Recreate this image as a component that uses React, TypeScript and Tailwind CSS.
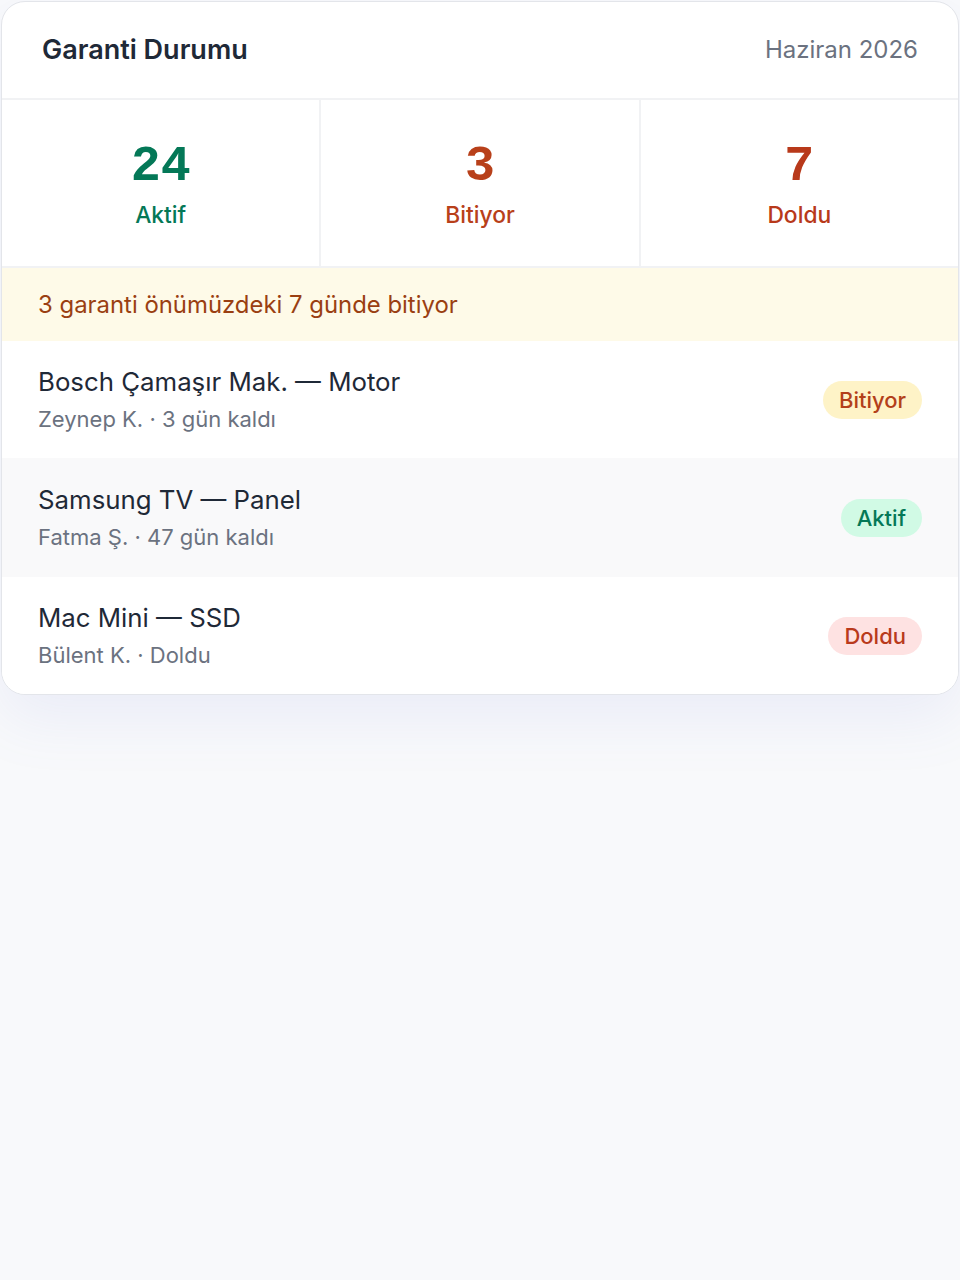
import React from "react";

type Status = "Bitiyor" | "Aktif" | "Doldu";

interface WarrantyItem {
  product: string;
  customer: string;
  remaining: string;
  status: Status;
}

const items: WarrantyItem[] = [
  { product: "Bosch Çamaşır Mak. — Motor", customer: "Zeynep K.", remaining: "3 gün kaldı", status: "Bitiyor" },
  { product: "Samsung TV — Panel", customer: "Fatma Ş.", remaining: "47 gün kaldı", status: "Aktif" },
  { product: "Mac Mini — SSD", customer: "Bülent K.", remaining: "Doldu", status: "Doldu" },
];

const badgeClass: Record<Status, string> = {
  Bitiyor: "bg-[#fef3c7] text-[#b3401a]",
  Aktif: "bg-[#d1fae5] text-[#047857]",
  Doldu: "bg-[#fee2e2] text-[#b93a1c]",
};

const Stat = ({ value, label, color, last }: { value: number; label: string; color: string; last?: boolean }) => (
  <div className={`flex flex-1 flex-col items-center justify-center ${last ? "" : "border-r-2 border-[#f1f2f4]"}`}>
    <span className={`font-mono text-[50px] font-bold leading-[60px] ${color}`}>{value}</span>
    <span className={`mt-[4px] text-[22.8px] font-medium leading-[28px] ${color}`}>{label}</span>
  </div>
);

export default function App() {
  return (
    <div className="min-h-screen bg-[#f8f9fb] px-[1px] pt-[1px] font-['Inter',sans-serif]">
      <div className="overflow-hidden rounded-[24px] border border-[#e3e5ea] bg-white shadow-[0_24px_60px_rgba(120,130,220,0.10)]">
        <header className="flex h-[98px] items-center justify-between border-b-2 border-[#f1f2f4] pl-[40px] pr-[40px]">
          <h1 className="text-[27px] font-semibold text-[#1f2937]">Garanti Durumu</h1>
          <span className="text-[24px] text-[#6b7280]">Haziran 2026</span>
        </header>

        <div className="flex h-[168px] border-b-2 border-[#f1f2f4]">
          <Stat value={24} label="Aktif" color="text-[#047857]" />
          <Stat value={3} label="Bitiyor" color="text-[#b8401a]" />
          <Stat value={7} label="Doldu" color="text-[#b8391a]" last />
        </div>

        <div className="flex h-[73px] items-center bg-[#fefae8] pl-[36px] text-[23.9px] text-[#9a3f12]">
          3 garanti önümüzdeki 7 günde bitiyor
        </div>

        <ul>
          {items.map((item, i) => (
            <li
              key={item.product}
              className={`flex items-center justify-between pl-[36px] pr-[36px] ${i === 1 ? "h-[119px] bg-[#f9f9fa]" : "h-[117px] bg-white"}`}
            >
              <div className="flex flex-col">
                <span className="text-[25.8px] leading-[32px] text-[#1f2937]">{item.product}</span>
                <span className="mt-[7px] text-[22px] leading-[28px] text-[#6b7280]">
                  {item.customer} · {item.remaining}
                </span>
              </div>
              <span className={`rounded-full px-[16px] py-[4px] text-[22px] font-medium leading-[30px] ${badgeClass[item.status]}`}>
                {item.status}
              </span>
            </li>
          ))}
        </ul>
      </div>
    </div>
  );
}
